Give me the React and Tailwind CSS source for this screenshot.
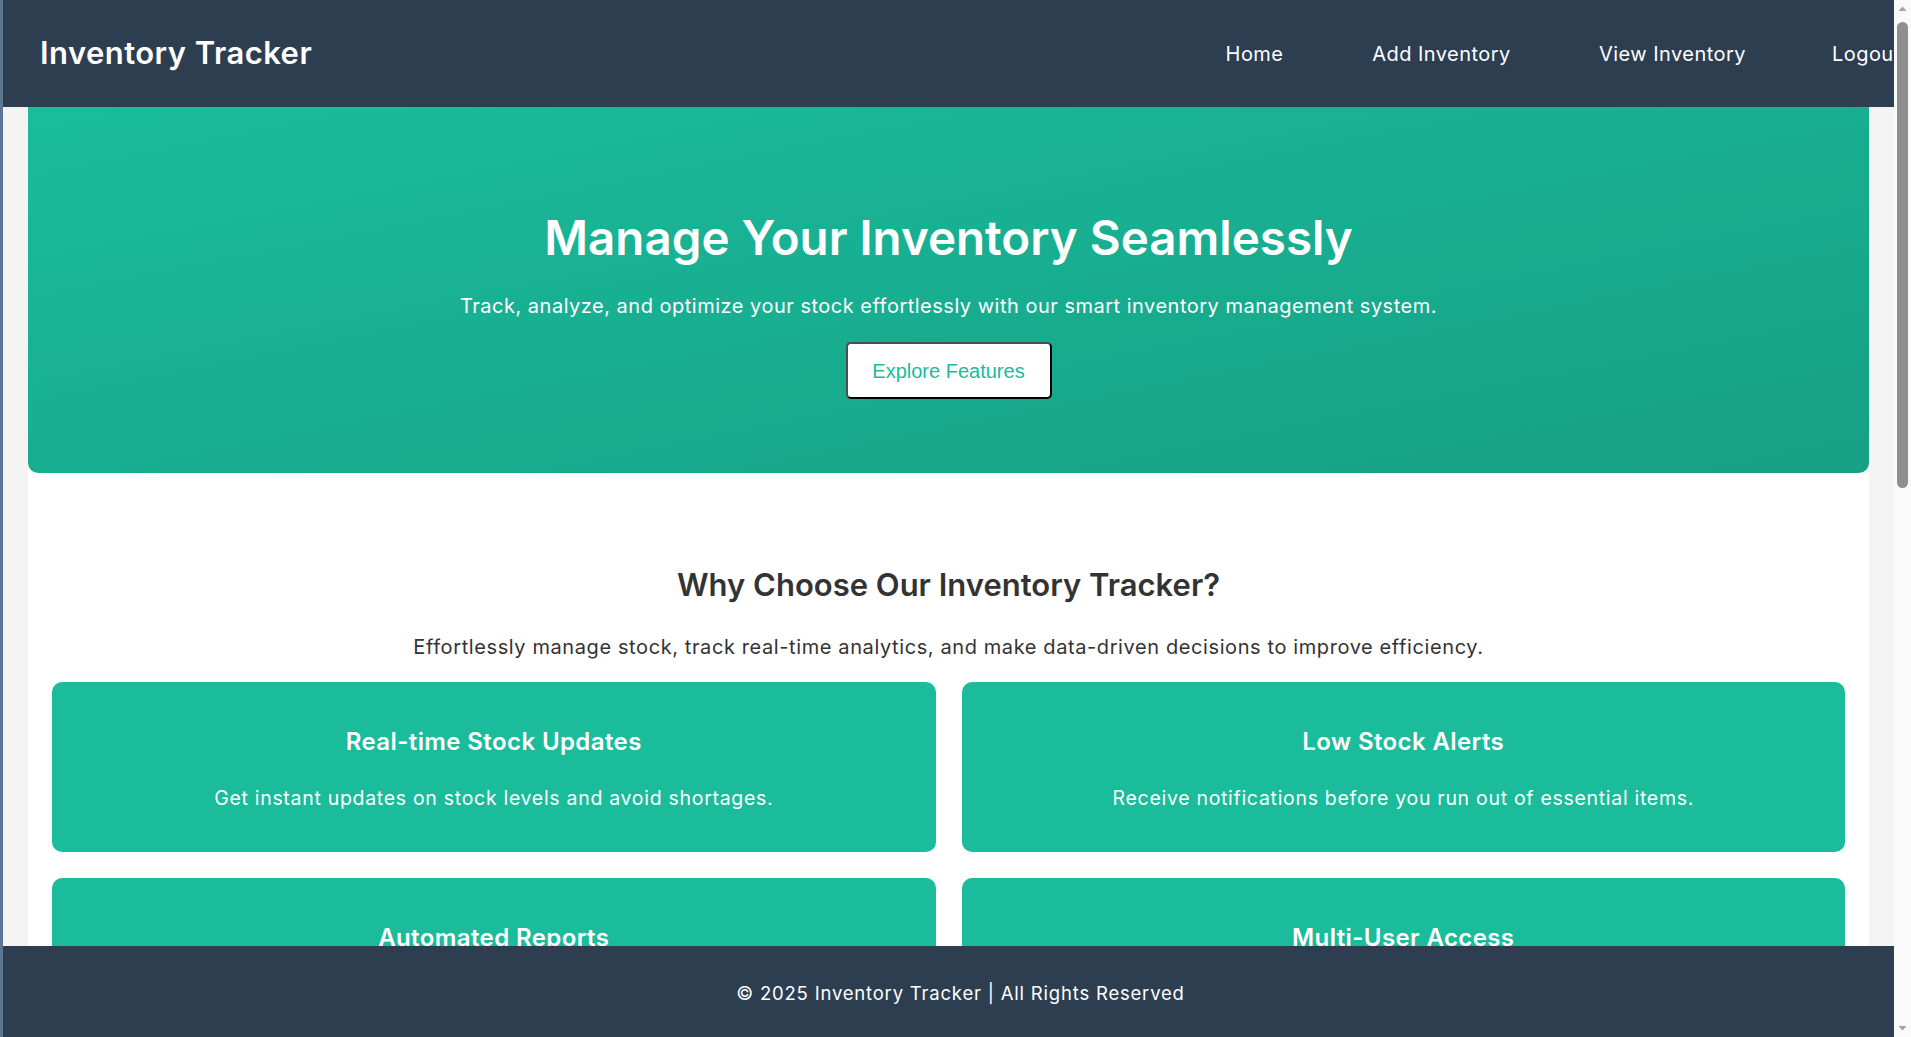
import React from "react";

const features = [
  { title: "Real-time Stock Updates", desc: "Get instant updates on stock levels and avoid shortages." },
  { title: "Low Stock Alerts", desc: "Receive notifications before you run out of essential items." },
  { title: "Automated Reports", desc: "Generate detailed inventory reports with a single click." },
  { title: "Multi-User Access", desc: "Collaborate with your team using role-based permissions." },
  { title: "Barcode Scanning", desc: "Add and update items quickly by scanning product barcodes." },
  { title: "Secure Cloud Storage", desc: "Keep your inventory data safe and accessible anywhere." },
];

function ScrollbarDrawing() {
  return (
    <div className="flex h-full w-[17px] shrink-0 flex-col items-center bg-[#fafafa]">
      <svg width="17" height="17" viewBox="0 0 17 17" className="shrink-0">
        <path d="M4.5 11 L8.5 6.5 L12.5 11 Z" fill="#a3a3a3" />
      </svg>
      <div className="mt-[5px] h-[466px] w-[11px] rounded-full bg-[#8f8f8f]" />
      <div className="flex-1" />
      <svg width="17" height="17" viewBox="0 0 17 17" className="shrink-0">
        <path d="M4.5 6 L8.5 10.5 L12.5 6 Z" fill="#a3a3a3" />
      </svg>
    </div>
  );
}

export default function App() {
  return (
    <div
      className="flex h-screen w-full overflow-hidden bg-[#5d7793]"
      style={{ fontFamily: "Inter, 'Open Sans', sans-serif" }}
    >
      <div className="w-[3px] shrink-0 rounded-tl-[6px] bg-[#5d7793]" />
      <div className="h-full min-w-0 flex-1 overflow-hidden bg-[#f4f4f4]">
        <header className="sticky top-0 z-10 flex h-[107px] items-center justify-between overflow-hidden bg-[#2c3e50] pl-[37px] text-white">
          <h1 className="whitespace-nowrap text-[31px] font-semibold tracking-[0.45px]">Inventory Tracker</h1>
          <nav className="flex shrink-0 items-center gap-[88px] whitespace-nowrap text-[20px] tracking-[0.45px]">
            <a className="w-[59px] text-center">Home</a>
            <a className="w-[139px] text-center">Add Inventory</a>
            <a className="w-[145px] text-center">View Inventory</a>
            <a className="w-[62px]">Logout</a>
          </nav>
        </header>

        <main className="mx-[25px] min-h-[2034px] bg-white">
          <section className="flex flex-col items-center rounded-b-[10px] bg-gradient-to-br from-[#1abc9c] to-[#16a085] pb-[74px] pt-[103px] text-center text-white">
            <h2 className="text-[47.5px] font-semibold leading-[56px]">Manage Your Inventory Seamlessly</h2>
            <p className="mt-[26px] text-[20px] leading-[28px] tracking-[0.5px]">
              Track, analyze, and optimize your stock effortlessly with our smart inventory management system.
            </p>
            <button
              className="mt-[22px] h-[57px] w-[206px] rounded-[5px] border-2 border-b-black border-l-[#4d4d4d] border-r-black border-t-[#4d4d4d] bg-white text-[20px] text-[#1abc9c]"
              style={{ fontFamily: "'Liberation Sans', Arial, sans-serif" }}
            >
              Explore Features
            </button>
          </section>

          <section className="px-[24px] pt-[92px] text-center">
            <h2 className="text-[31px] font-semibold leading-[40px] text-[#333]">Why Choose Our Inventory Tracker?</h2>
            <p className="mt-[28px] text-[20px] leading-[28px] tracking-[0.6px] text-[#333]">
              Effortlessly manage stock, track real-time analytics, and make data-driven decisions to improve efficiency.
            </p>
            <div className="mt-[21px] grid grid-cols-2 gap-[26px]">
              {features.map((f) => (
                <div key={f.title} className="h-[170px] rounded-[10px] bg-[#1abc9c] pt-[45px] text-white">
                  <h3 className="text-[24px] font-semibold leading-[30px] tracking-[0.4px]">{f.title}</h3>
                  <p className="mt-[28px] text-[19.5px] leading-[26px] tracking-[0.7px]">{f.desc}</p>
                </div>
              ))}
            </div>
          </section>
        </main>

        <footer className="sticky bottom-0 z-10 flex h-[91px] items-center justify-center bg-[#2c3e50] pl-[24px] pt-[5px] text-[18.5px] tracking-[0.8px] text-white">
          © 2025 Inventory Tracker | All Rights Reserved
        </footer>
      </div>
      <ScrollbarDrawing />
    </div>
  );
}
